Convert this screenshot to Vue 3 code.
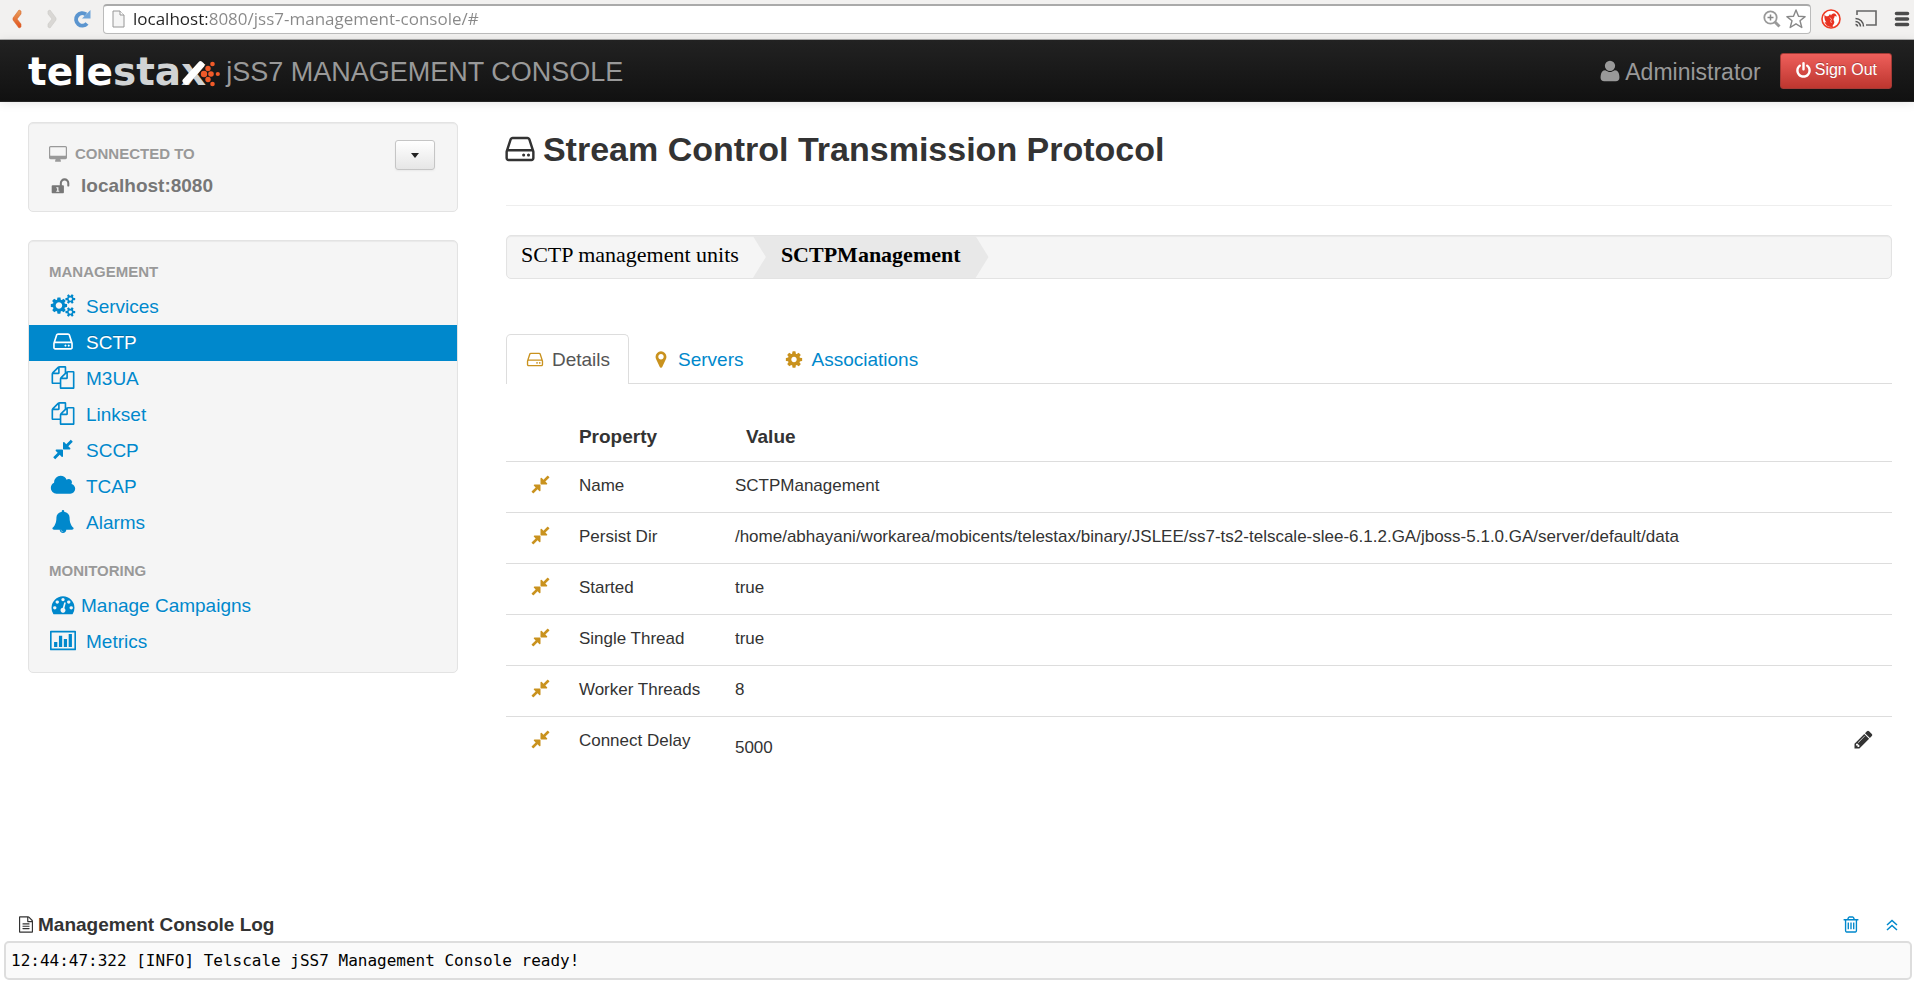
<script setup>
import { ref, h } from 'vue'

const glyphs = {
  cogs: 'M896 896q0-106-75-181t-181-75-181 75-75 181 75 181 181 75 181-75 75-181zm768 512q0-52-38-90t-90-38-90 38-38 90q0 53 37.5 90.5t90.5 37.5 90.5-37.5 37.5-90.5zm0-1024q0-52-38-90t-90-38-90 38-38 90q0 53 37.5 90.5t90.5 37.5 90.5-37.5 37.5-90.5zm-384 421v185q0 10-7 19.500t-16 10.500l-155 24q-11 35-32 76 34 48 90 115 7 11 7 20 0 12-7 19-23 30-82.500 89.500t-78.500 59.500q-11 0-21-7l-115-90q-37 19-77 31-11 108-23 155-7 24-30 24h-186q-11 0-20-7.500t-10-17.500l-23-153q-34-10-75-31l-118 89q-7 7-20 7-11 0-21-8-144-133-144-160 0-9 7-19 10-14 41-53t47-61q-23-44-35-82l-152-24q-10-1-17-9.500t-7-19.500v-185q0-10 7-19.500t16-10.500l155-24q11-35 32-76-34-48-90-115-7-11-7-20 0-12 7-20 22-30 82-89t79-59q11 0 21 7l115 90q34-18 77-32 11-108 23-154 7-24 30-24h186q11 0 20 7.500t10 17.500l23 153q34 10 75 31l118-89q8-7 20-7 11 0 21 8 144 133 144 160 0 8-7 19-12 16-42 54t-45 60q23 48 34 82l152 23q10 2 17 10.500t7 19.500zm640 533v140q0 16-149 31-12 27-30 52 51 113 51 138 0 4-4 7-122 71-124 71-8 0-46-47t-52-68q-20 2-30 2t-30-2q-14 21-52 68t-46 47q-2 0-124-71-4-3-4-7 0-25 51-138-18-25-30-52-149-15-149-31v-140q0-16 149-31 13-29 30-52-51-113-51-138 0-4 4-7 4-2 35-20t59-34 30-16q8 0 46 46.500t52 67.500q20-2 30-2t30 2q51-71 92-112l6-2q4 0 124 70 4 3 4 7 0 25-51 138 17 23 30 52 149 15 149 31zm0-1024v140q0 16-149 31-12 27-30 52 51 113 51 138 0 4-4 7-122 71-124 71-8 0-46-47t-52-68q-20 2-30 2t-30-2q-14 21-52 68t-46 47q-2 0-124-71-4-3-4-7 0-25 51-138-18-25-30-52-149-15-149-31v-140q0-16 149-31 13-29 30-52-51-113-51-138 0-4 4-7 4-2 35-20t59-34 30-16q8 0 46 46.500t52 67.500q20-2 30-2t30 2q51-71 92-112l6-2q4 0 124 70 4 3 4 7 0 25-51 138 17 23 30 52 149 15 149 31z',
  cog: 'M1152 896q0-106-75-181t-181-75-181 75-75 181 75 181 181 75 181-75 75-181zm512-109v222q0 12-8 23t-20 13l-185 28q-19 54-39 91 35 50 107 138 10 12 10 25t-9 23q-27 37-99 108t-94 71q-12 0-26-9l-138-108q-44 23-91 38-16 136-29 186-7 28-36 28h-222q-14 0-24.500-8.500t-11.500-21.500l-28-184q-49-16-90-37l-141 107q-10 9-25 9-14 0-25-11-126-114-165-168-7-10-7-23 0-12 8-23 15-21 51-66.500t54-70.500q-27-50-41-99l-183-27q-13-2-21-12.500t-8-23.500v-222q0-12 8-23t19-13l186-28q14-46 39-92-40-57-107-138-10-12-10-24 0-10 9-23 26-36 98.500-107.500t94.500-71.500q13 0 26 10l138 107q44-23 91-38 16-136 29-186 7-28 36-28h222q14 0 24.500 8.500t11.500 21.500l28 184q49 16 90 37l142-107q9-9 24-9 13 0 25 10 129 119 165 170 7 8 7 22 0 12-8 23-15 21-51 66.500t-54 70.500q26 50 41 98l183 28q13 2 21 12.500t8 23.500z',
  hdd: 'M1168 1216q0 33-23.500 56.500t-56.500 23.500-56.500-23.500-23.500-56.500 23.500-56.500 56.500-23.500 56.500 23.500 23.500 56.500zm256 0q0 33-23.500 56.500t-56.500 23.500-56.500-23.500-23.500-56.500 23.500-56.500 56.500-23.500 56.500 23.500 23.500 56.500zm112 160v-320q0-13-9.500-22.500t-22.500-9.500h-1216q-13 0-22.500 9.500t-9.500 22.500v320q0 13 9.500 22.500t22.500 9.500h1216q13 0 22.500-9.500t9.500-22.500zm-1230-480h1180l-157-482q-4-13-16-21.500t-26-8.500h-782q-14 0-26 8.500t-16 21.500zm1358 160v320q0 66-47 113t-113 47h-1216q-66 0-113-47t-47-113v-320q0-25 16-75l197-606q17-53 63-86t101-33h782q55 0 101 33t63 86l197 606q16 50 16 75z',
  copy: 'M1696 384q40 0 68 28t28 68v1216q0 40-28 68t-68 28h-960q-40 0-68-28t-28-68v-288h-544q-40 0-68-28t-28-68v-672q0-40 20-88t48-76l408-408q28-28 76-48t88-20h416q40 0 68 28t28 68v328q68-40 128-40h416zm-544 213l-299 299h299v-299zm-640-384l-299 299h299v-299zm196 647l316-316v-416h-384v416q0 40-28 68t-68 28h-416v640h512v-256q0-40 20-88t48-76zm956 804v-1152h-384v416q0 40-28 68t-68 28h-416v640h896z',
  compress: 'M896 960v448q0 26-19 45t-45 19-45-19l-144-144-332 332q-10 10-23 10t-23-10l-114-114q-10-10-10-23t10-23l332-332-144-144q-19-19-19-45t19-45 45-19h448q26 0 45 19t19 45zm755-672q0 13-10 23l-332 332 144 144q19 19 19 45t-19 45-45 19h-448q-26 0-45-19t-19-45v-448q0-26 19-45t45-19 45 19l144 144 332-332q10-10 23-10t23 10l114 114q10 10 10 23z',
  cloud: 'M1984 1152q0 159-112.500 271.500t-271.500 112.500h-1088q-185 0-316.500-131.500t-131.500-316.500q0-132 71-241.500t187-163.500q-2-28-2-43 0-212 150-362t362-150q158 0 286.500 88t187.500 230q70-62 166-62 106 0 181 75t75 181q0 75-41 138 129 30 213 134.500t84 239.500z',
  bell: 'M912 1696q0-16-16-16-59 0-101.500-42.500t-42.500-101.500q0-16-16-16t-16 16q0 73 51.500 124.500t124.500 51.500q16 0 16-16zm816-288q0 52-38 90t-90 38h-448q0 106-75 181t-181 75-181-75-75-181h-448q-52 0-90-38t-38-90q50-42 91-88t85-119.500 74.500-158.500 50-206 19.500-260q0-152 117-282.500t307-158.500q-8-19-8-39 0-40 28-68t68-28 68 28 28 68q0 20-8 39 190 28 307 158.500t117 282.500q0 139 19.500 260t50 206 74.500 158.500 85 119.500 91 88z',
  gauge: 'M384 1152q0-53-37.500-90.500t-90.500-37.500-90.500 37.500-37.500 90.500 37.500 90.500 90.500 37.500 90.500-37.500 37.500-90.500zm192-448q0-53-37.500-90.500t-90.500-37.500-90.500 37.500-37.500 90.500 37.500 90.500 90.500 37.500 90.500-37.500 37.500-90.500zm428 481l101-382q6-26-7.500-48.500t-38.500-29.500-48 6.500-30 39.500l-101 382q-60 5-107 43.500t-63 98.500q-20 77 20 146t117 89 146-20 89-117q16-60-6-117t-72-91zm660-33q0-53-37.500-90.500t-90.500-37.500-90.500 37.500-37.500 90.500 37.500 90.500 90.500 37.500 90.500-37.500 37.500-90.500zm-640-640q0-53-37.500-90.500t-90.500-37.500-90.500 37.500-37.500 90.500 37.500 90.500 90.500 37.500 90.500-37.500 37.500-90.500zm448 192q0-53-37.500-90.500t-90.500-37.500-90.500 37.500-37.500 90.500 37.500 90.500 90.500 37.500 90.500-37.500 37.500-90.500zm320 448q0 261-141 483-19 29-54 29h-1402q-35 0-54-29-141-221-141-483 0-182 71-348t191-286 286-191 348-71 348 71 286 191 191 286 71 348z',
  chart: 'M512 896v384h-256v-384zM896 384v896h-256v-896zM1280 640v640h-256v-640zM1664 256v1024h-256v-1024zM0 0h1920q66 0 66 66v1404q0 66-66 66h-1920q-66 0-66-66v-1404q0-66 66-66zM62 128v1280h1796v-1280z',
  desktop: 'M1728 992v-832q0-13-9.500-22.500t-22.500-9.500h-1600q-13 0-22.500 9.500t-9.500 22.500v832q0 13 9.500 22.500t22.500 9.500h1600q13 0 22.500-9.500t9.500-22.500zm128-832v1088q0 66-47 113t-113 47h-544q0 37 16 77.500t32 71 16 43.500q0 26-19 45t-45 19h-512q-26 0-45-19t-19-45q0-14 16-44t32-70 16-78h-544q-66 0-113-47t-47-113v-1088q0-66 47-113t113-47h1600q66 0 113 47t47 113z',
  unlock: 'M1728 576v256q0 26-19 45t-45 19h-64q-26 0-45-19t-19-45v-256q0-106-75-181t-181-75-181 75-75 181v192h96q40 0 68 28t28 68v576q0 40-28 68t-68 28h-960q-40 0-68-28t-28-68v-576q0-40 28-68t68-28h672v-192q0-185 131.500-316.500t316.500-131.500 316.500 131.500 131.500 316.500zM500 960v100h80v240h-80v100h280v-100h-80v-340z',
  user: 'M1600 1405q0 120-73 189.500t-194 69.500h-874q-121 0-194-69.500t-73-189.500q0-53 3.500-103.500t14-109 26.500-108.500 43-97.500 62-81 85.500-53.500 111.500-20q9 0 42 21.500t74.500 48 108 48 133.500 21.500 133.500-21.500 108-48 74.500-48 42-21.500q61 0 111.500 20t85.500 53.500 62 81 43 97.500 26.500 108.500 14 109 3.500 103.500zm-320-893q0 159-112.500 271.500t-271.500 112.500-271.500-112.500-112.500-271.500 112.500-271.500 271.500-112.500 271.500 112.500 112.500 271.500z',
  power: 'M1664 896q0 156-61 298t-164 245-245 164-298 61-298-61-245-164-164-245-61-298q0-182 80.500-343t226.500-270q43-32 95.500-25t83.500 50q32 42 24.500 94.500t-49.500 84.500q-98 74-151.500 181t-53.500 228q0 104 40.500 198.500t109.500 163.500 163.500 109.500 198.500 40.500 198.500-40.500 163.500-109.500 109.500-163.500 40.500-198.500q0-121-53.500-228t-151.500-181q-42-32-49.500-84.500t24.500-94.500q31-43 84-50t95 25q146 109 226.500 270t80.500 343zm-640-768v640q0 52-38 90t-90 38-90-38-38-90v-640q0-52 38-90t90-38 90 38 38 90z',
  marker: 'M1152 640q0-106-75-181t-181-75-181 75-75 181 75 181 181 75 181-75 75-181zm256 0q0 109-33 179l-364 774q-16 33-47.500 52t-67.500 19-67.500-19-46.500-52l-365-774q-33-70-33-179 0-212 150-362t362-150 362 150 150 362z',
  pencil: 'M491 1536l91-91-235-235-91 91v107h128v128h107zm523-928q0-22-22-22-10 0-17 7l-542 542q-7 7-7 17 0 22 22 22 10 0 17-7l542-542q7-7 7-17zm-54-192l416 416-832 832h-416v-416zm683 96q0 53-37 90l-166 166-416-416 166-165q36-38 90-38 53 0 91 38l235 234q37 39 37 91z',
  trash: 'M704 736v576q0 14-9 23t-23 9h-64q-14 0-23-9t-9-23v-576q0-14 9-23t23-9h64q14 0 23 9t9 23zm256 0v576q0 14-9 23t-23 9h-64q-14 0-23-9t-9-23v-576q0-14 9-23t23-9h64q14 0 23 9t9 23zm256 0v576q0 14-9 23t-23 9h-64q-14 0-23-9t-9-23v-576q0-14 9-23t23-9h64q14 0 23 9t9 23zm128 724v-948h-896v948q0 22 7 40.500t14.500 27 10.500 8.500h832q3 0 10.500-8.500t14.500-27 7-40.500zm-672-1076h448l-48-117q-7-9-17-11h-317q-10 2-17 11zm928 32v64q0 14-9 23t-23 9h-96v948q0 83-47 143.500t-113 60.500h-832q-66 0-113-58.500t-47-141.500v-952h-96q-14 0-23-9t-9-23v-64q0-14 9-23t23-9h309l70-167q15-37 54-63t79-26h320q40 0 79 26t54 63l70 167h309q14 0 23 9t9 23z',
  file: 'M1596 380q28 28 48 76t20 88v1152q0 40-28 68t-68 28h-1344q-40 0-68-28t-28-68v-1600q0-40 28-68t68-28h896q40 0 88 20t76 48zm-444-244v376h376q-10-29-22-41l-313-313q-12-12-41-22zm384 1528v-1024h-416q-40 0-68-28t-28-68v-416h-768v1536h1280zm-1024-864q0-14 9-23t23-9h704q14 0 23 9t9 23v64q0 14-9 23t-23 9h-704q-14 0-23-9t-9-23v-64zm736 224q14 0 23 9t9 23v64q0 14-9 23t-23 9h-704q-14 0-23-9t-9-23v-64q0-14 9-23t23-9h704zm0 256q14 0 23 9t9 23v64q0 14-9 23t-23 9h-704q-14 0-23-9t-9-23v-64q0-14 9-23t23-9h704z'
}

const boxes = {
  cogs: '-64 0 2048 1792',
  cloud: '0 0 2048 1792',
  chart: '-66 -128 2052 1792',
  desktop: '-64 0 1920 1792',
  file: '128 0 1536 1792',
  trash: '192 0 1408 1792'
}

const Icon = (props) =>
  h('svg', { viewBox: boxes[props.name] || '0 0 1792 1792', 'aria-hidden': 'true' }, [
    h('path', { d: glyphs[props.name], fill: 'currentColor', 'fill-rule': 'evenodd' })
  ])
Icon.props = ['name']

const address = ref('localhost:8080/jss7-management-console/#')

const groups = [
  {
    title: 'MANAGEMENT',
    items: [
      { label: 'Services', icon: 'cogs' },
      { label: 'SCTP', icon: 'hdd', active: true },
      { label: 'M3UA', icon: 'copy' },
      { label: 'Linkset', icon: 'copy' },
      { label: 'SCCP', icon: 'compress' },
      { label: 'TCAP', icon: 'cloud' },
      { label: 'Alarms', icon: 'bell' }
    ]
  },
  {
    title: 'MONITORING',
    items: [
      { label: 'Manage Campaigns', icon: 'gauge', tight: true },
      { label: 'Metrics', icon: 'chart' }
    ]
  }
]

const tabs = [
  { label: 'Details', icon: 'hdd' },
  { label: 'Servers', icon: 'marker' },
  { label: 'Associations', icon: 'cog' }
]
const activeTab = ref('Details')

const rows = [
  { name: 'Name', value: 'SCTPManagement' },
  {
    name: 'Persist Dir',
    value: '/home/abhayani/workarea/mobicents/telestax/binary/JSLEE/ss7-ts2-telscale-slee-6.1.2.GA/jboss-5.1.0.GA/server/default/data'
  },
  { name: 'Started', value: 'true' },
  { name: 'Single Thread', value: 'true' },
  { name: 'Worker Threads', value: '8' },
  { name: 'Connect Delay', value: '5000', editable: true }
]
</script>

<template>
  <div class="page">
    <div class="browser">
      <button class="tool back" type="button" aria-label="Back">
        <svg viewBox="0 0 10 20"><defs><linearGradient id="amber" x1="0" y1="0" x2="0" y2="1"><stop offset="0" stop-color="#e8a15c" /><stop offset="1" stop-color="#e2501c" /></linearGradient></defs><path d="M7 1l2 1v3L5 10l4 5v3l-2 1L1 11V9z" fill="url(#amber)" stroke="#d9662c" stroke-width=".6" /></svg>
      </button>
      <button class="tool forward" type="button" aria-label="Forward">
        <svg viewBox="0 0 10 20"><path d="M3 1L1 2v3l4 5-4 5v3l2 1 6-8V9z" fill="#d9d7d4" stroke="#cbc9c6" stroke-width=".6" /></svg>
      </button>
      <button class="tool reload" type="button" aria-label="Reload">
        <svg viewBox="0 0 18 20"><path d="M14 14.500A6.200 6.200 0 1 1 13 5.400" fill="none" stroke="#5b95cf" stroke-width="4" /><path d="M17.500 1v8.500H9z" fill="#6fa5da" /></svg>
      </button>
      <div class="address">
        <svg class="sheet" viewBox="0 0 13 18"><path d="M1 1h7l4 4v12H1z" fill="#f5f5f5" stroke="#969696" /><path d="M8 1v4h4" fill="#fff" stroke="#969696" /></svg>
        <input v-model="address" type="text" aria-label="Address" spellcheck="false" />
        <svg class="lens" viewBox="0 0 18 18"><circle cx="7.500" cy="7.500" r="6.200" fill="none" stroke="#999" stroke-width="1.800" /><path d="M4.500 7.500h6M7.500 4.500v6" stroke="#888" stroke-width="1.500" /><path d="M12 12l4.500 4.500" stroke="#999" stroke-width="3" /></svg>
        <svg class="star" viewBox="0 0 20 20"><path d="M10 1l2.500 6.300 6.600.3-5.100 4.200 1.800 6.700L10 14.800l-5.800 3.700L6 11.800.9 7.600l6.600-.3z" fill="#fff" stroke="#888" stroke-width="1.400" stroke-linejoin="round" /></svg>
      </div>
      <button class="tool bird" type="button" aria-label="Extension">
        <svg viewBox="0 0 20 20"><circle cx="10" cy="10" r="9" fill="#fff" stroke="#ee3b24" stroke-width="1.600" /><path d="M3.500 5.500c1 2 2.500 2 4 1.500l1.500-2 1 1.500c1-2 3-2.500 4.500-1.500l1.500 2.500-2.500-.5c.5 1.500-1 2-1 3.500s1.500 2 .5 4-2 2-1 3.500c-4 .5-7.500-1.500-8.500-5l2 .5c-1.500-1.500-2.500-4-2-8z" fill="#e93222" /><path d="M9 8.500l1.500 2-1 1.500 1 2" fill="none" stroke="#fff" stroke-width=".6" /></svg>
      </button>
      <button class="tool cast" type="button" aria-label="Cast">
        <svg viewBox="0 0 22 17"><path d="M2 5V1h19v14H11" fill="none" stroke="#666" stroke-width="1.600" /><path d="M.500 14.500a2 2 0 0 1 2 2M.500 11.500a5 5 0 0 1 5 5M.500 8.500a8 8 0 0 1 8 8" fill="none" stroke="#555" stroke-width="1.500" /></svg>
      </button>
      <button class="tool menu" type="button" aria-label="Menu">
        <svg viewBox="0 0 15 16"><path d="M2 2.500h11M2 8h11M2 13.500h11" stroke="#4b4b4b" stroke-width="3.600" stroke-linecap="round" /></svg>
      </button>
    </div>

    <header class="navbar">
      <a class="brand" href="#">
        <span class="logo">tele<span class="dim">sta<span class="cross">x</span></span></span>
        <svg class="dots" viewBox="0 0 20 26"><g fill="#f15a29"><circle cx="4" cy="13" r="3.200" /><circle cx="11" cy="13" r="2.800" /><circle cx="17.800" cy="13" r="2.100" /><circle cx="8" cy="7.500" r="2.700" /><circle cx="8" cy="18.500" r="2.700" /><circle cx="12.500" cy="3" r="2.300" /><circle cx="12.500" cy="23" r="2.300" /></g></svg>
        <span class="product">jSS7 MANAGEMENT CONSOLE</span>
      </a>
      <div class="account">
        <Icon name="user" class="account-icon" />
        <span class="account-name">Administrator</span>
        <button class="signout" type="button"><Icon name="power" class="power-icon" />Sign Out</button>
      </div>
    </header>

    <div class="layout">
      <aside class="sidebar">
        <section class="well connection">
          <div>
            <h2 class="caption"><Icon name="desktop" class="desktop-icon" />CONNECTED TO</h2>
            <p class="host"><Icon name="unlock" class="unlock-icon" />localhost:8080</p>
          </div>
          <button class="dropdown" type="button" aria-label="Choose connection"><span class="caret"></span></button>
        </section>
        <nav class="well menu-well">
          <template v-for="group in groups" :key="group.title">
            <h2 class="caption group-title">{{ group.title }}</h2>
            <a v-for="item in group.items" :key="item.label" href="#" class="nav-link" :class="{ active: item.active, tight: item.tight }">
              <Icon :name="item.icon" class="nav-icon" />{{ item.label }}
            </a>
          </template>
        </nav>
      </aside>

      <main>
        <h1><Icon name="hdd" class="title-icon" />Stream Control Transmission Protocol</h1>
        <ol class="breadcrumb">
          <li><a href="#">SCTP management units</a></li>
          <li class="current">SCTPManagement</li>
        </ol>
        <div class="tabs" role="tablist">
          <button v-for="tab in tabs" :key="tab.label" type="button" role="tab" class="tab" :class="{ selected: tab.label === activeTab }" :aria-selected="tab.label === activeTab" @click="activeTab = tab.label">
            <Icon :name="tab.icon" class="tab-icon" />{{ tab.label }}
          </button>
        </div>
        <table>
          <colgroup><col class="col-icon" /><col class="col-name" /><col /><col class="col-edit" /></colgroup>
          <thead>
            <tr><th></th><th>Property</th><th class="value-head">Value</th><th></th></tr>
          </thead>
          <tbody>
            <tr v-for="row in rows" :key="row.name">
              <td class="mark"><Icon name="compress" class="row-icon" /></td>
              <td>{{ row.name }}</td>
              <td :class="{ editable: row.editable }">{{ row.value }}</td>
              <td class="edit"><button v-if="row.editable" type="button" aria-label="Edit Connect Delay"><Icon name="pencil" class="row-icon" /></button></td>
            </tr>
          </tbody>
        </table>
      </main>
    </div>

    <footer>
      <div class="log-head">
        <h2><Icon name="file" class="file-icon" />Management Console Log</h2>
        <div class="log-tools">
          <a href="#" aria-label="Clear log"><Icon name="trash" class="trash-icon" /></a>
          <a href="#" aria-label="Expand log"><svg class="angles" viewBox="0 0 12 12"><path d="M1 6l5-4.500L11 6M1 11l5-4.500L11 11" fill="none" stroke="currentColor" stroke-width="1.500" /></svg></a>
        </div>
      </div>
      <pre>12:44:47:322 [INFO] Telscale jSS7 Management Console ready!</pre>
    </footer>
  </div>
</template>

<style>
body {
  background: #fff;
}
</style>

<style scoped>
* {
  box-sizing: border-box;
}
svg {
  display: block;
  flex: none;
}
button {
  font-family: inherit;
  cursor: pointer;
}
.page {
  min-height: 100vh;
  display: flex;
  flex-direction: column;
  font-family: "Liberation Sans", Arial, sans-serif;
  font-size: 17px;
  color: #333;
}

/* browser toolbar */
.browser {
  display: flex;
  align-items: center;
  height: 40px;
  padding: 0 4px 2px 12px;
  background: #f2f1f0;
  border-bottom: 1px solid #aaa;
}
.tool {
  padding: 0;
  border: 0;
  background: none;
}
.back svg, .forward svg {
  width: 10px;
  height: 20px;
}
.forward {
  margin-left: 25px;
}
.reload {
  margin: 0 12px 0 16px;
}
.reload svg {
  width: 18px;
  height: 20px;
}
.address {
  flex: 1;
  display: flex;
  align-items: center;
  height: 30px;
  padding: 0 4px 0 8px;
  background: #fff;
  border: 1px solid #bbb;
  border-top: 2px solid #aaa;
  border-radius: 4px;
}
.sheet {
  width: 13px;
  height: 18px;
}
.address input {
  flex: 1;
  min-width: 0;
  height: 27px;
  margin-left: 8px;
  padding: 0 0 2px;
  border: 0;
  outline: 0;
  font: 17px "Open Sans", "Noto Sans", sans-serif;
  color: transparent;
  background: linear-gradient(90deg, #222 74px, #888 74px) text;
  -webkit-background-clip: text;
}
.lens {
  width: 18px;
  height: 18px;
  margin-right: 5px;
}
.star {
  width: 20px;
  height: 20px;
}
.bird {
  margin-left: 10px;
}
.bird svg {
  width: 20px;
  height: 20px;
}
.cast {
  margin-left: 14px;
}
.cast svg {
  width: 22px;
  height: 17px;
}
.menu {
  margin-left: 17px;
}
.menu svg {
  width: 16px;
  height: 16px;
}

/* top bar */
.navbar {
  display: flex;
  justify-content: space-between;
  align-items: center;
  height: 62px;
  padding: 0 22px 0 28px;
  background: linear-gradient(#222, #111);
  border-bottom: 1px solid #252525;
  box-shadow: 0 1px 10px rgba(0, 0, 0, .1);
  color: #999;
}
.brand {
  display: flex;
  align-items: center;
  color: #999;
  text-decoration: none;
}
.logo {
  padding-top: 2px;
  font: bold 39px/60px "DejaVu Sans", sans-serif;
  color: #fff;
}
.dim {
  color: #d1d3d4;
}
.cross {
  position: relative;
}
.cross::after {
  content: "";
  position: absolute;
  left: 9px;
  bottom: 7px;
  width: 7px;
  height: 28px;
  border-radius: 2px;
  background: #fff;
  transform: rotate(42deg);
}
.dots {
  width: 20px;
  height: 26px;
  margin: 6px 6px 0 -6px;
}
.product {
  padding-top: 4px;
  font-size: 27px;
}
.account {
  display: flex;
  align-items: center;
  font-size: 23px;
}
.account-icon {
  width: 24px;
  height: 24px;
  margin-right: 3px;
}
.account-name {
  padding-top: 4px;
}
.signout {
  display: flex;
  align-items: center;
  height: 36px;
  margin-left: 19px;
  padding: 0 14px 1px 14px;
  border: 1px solid #a33a35;
  border-radius: 3px;
  background: linear-gradient(#ee5f5b, #bd362f);
  color: #fff;
  font-size: 16px;
  text-shadow: 0 -1px 0 rgba(0, 0, 0, .25);
}
.power-icon {
  width: 17px;
  height: 17px;
  margin-right: 3px;
}

/* columns */
.layout {
  display: grid;
  grid-template-columns: 23.077% 1fr;
  column-gap: 2.564%;
  align-items: start;
  padding: 20px 22px 0 28px;
}
.sidebar {
  display: grid;
  gap: 28px;
}
.well {
  background: #f5f5f5;
  border: 1px solid #e3e3e3;
  border-radius: 5px;
  box-shadow: inset 0 1px 1px rgba(0, 0, 0, .05);
}
.caption {
  display: flex;
  align-items: center;
  margin: 0;
  font-size: 15px;
  line-height: 24px;
  color: #999;
  text-shadow: 0 1px 0 rgba(255, 255, 255, .5);
}
.connection {
  display: flex;
  justify-content: space-between;
  align-items: flex-start;
  height: 90px;
  padding: 17px 22px 17px 20px;
}
.connection .caption {
  margin-top: 2px;
}
.desktop-icon {
  width: 18px;
  height: 17px;
  margin-right: 8px;
}
.host {
  display: flex;
  align-items: center;
  margin: 8px 0 0;
  font-size: 19px;
  font-weight: bold;
  line-height: 24px;
  color: #777;
}
.unlock-icon {
  width: 19px;
  height: 19px;
  margin: 0 11px 0 2px;
}
.dropdown {
  display: grid;
  place-items: center;
  width: 40px;
  height: 30px;
  padding: 0;
  border: 1px solid #c5c5c5;
  border-radius: 3px;
  background: linear-gradient(#fff, #e6e6e6);
  box-shadow: 0 1px 2px rgba(0, 0, 0, .05);
}
.caret {
  border: 4px solid transparent;
  border-top: 5px solid #222;
  border-bottom: 0;
}
.menu-well {
  padding: 12px 0;
}
.group-title {
  padding: 7px 20px 5px;
}
.nav-link + .group-title {
  padding-top: 18px;
}
.nav-link {
  display: flex;
  align-items: center;
  height: 36px;
  padding: 0 21px;
  font-size: 19px;
  color: #08c;
  text-decoration: none;
  text-shadow: 0 1px 0 rgba(255, 255, 255, .5);
}
.nav-link.active {
  background: #08c;
  color: #fff;
  text-shadow: 0 -1px 0 rgba(0, 0, 0, .2);
}
.nav-icon {
  width: 26px;
  height: 23px;
  margin: 0 10px 3px 0;
}
.tight .nav-icon {
  margin-right: 5px;
}

/* content */
h1 {
  display: flex;
  align-items: center;
  margin: 0 0 29px;
  padding: 5px 0 34px;
  border-bottom: 1px solid #eee;
  font-size: 34px;
  line-height: 44px;
}
.title-icon {
  width: 34px;
  height: 34px;
  margin: 0 6px 0 -3px;
}
.breadcrumb {
  display: flex;
  height: 44px;
  margin: 0 0 55px;
  padding: 0;
  overflow: hidden;
  list-style: none;
  border: 1px solid #e3e3e3;
  border-radius: 5px;
  background: #f5f5f5;
  box-shadow: inset 0 1px 1px rgba(0, 0, 0, .05);
  font: 22px/38px "Liberation Serif", "Times New Roman", serif;
  color: #000;
}
.breadcrumb li {
  padding: 0 14px;
}
.breadcrumb a {
  color: #000;
  text-decoration: none;
}
.breadcrumb .current {
  padding: 0 28px;
  background: #e8e8e8;
  clip-path: polygon(0 0, calc(100% - 13px) 0, 100% 50%, calc(100% - 13px) 100%, 0 100%, 13px 50%);
  font-weight: bold;
}
.tabs {
  display: flex;
  gap: 3px;
  border-bottom: 1px solid #ddd;
}
.tab {
  display: flex;
  align-items: center;
  height: 50px;
  margin-bottom: -1px;
  padding: 0 18px 0 17px;
  border: 1px solid transparent;
  border-bottom: 0;
  border-radius: 5px 5px 0 0;
  background: none;
  font-size: 19px;
  color: #08c;
}
.tab.selected {
  background: #fff;
  border-color: #ddd;
  color: #555;
}
.tab-icon {
  width: 22px;
  height: 19px;
  margin-right: 6px;
  color: #c9921e;
}
table {
  width: 100%;
  margin-top: 26px;
  border-collapse: collapse;
  table-layout: fixed;
}
.col-icon {
  width: 63px;
}
.col-name {
  width: 156px;
}
.col-edit {
  width: 57px;
}
th, td {
  padding: 0 10px;
  text-align: left;
  line-height: 20px;
}
th {
  height: 51px;
  padding-top: 3px;
  font-size: 19px;
}
th.value-head {
  padding-left: 21px;
}
td {
  height: 51px;
  padding-top: 14px;
  vertical-align: top;
  border-top: 1px solid #ddd;
  white-space: nowrap;
}
td.editable {
  padding-top: 21px;
}
td.mark {
  padding: 12px 0 0 24px;
}
.row-icon {
  width: 21px;
  height: 21px;
}
.mark .row-icon {
  color: #c9921e;
}
td.edit {
  padding: 12px 0 0 18px;
}
.edit button {
  display: block;
  padding: 0;
  border: 0;
  background: none;
  color: #333;
}

/* log */
footer {
  margin-top: auto;
  padding: 20px 2px 1px 4px;
}
.log-head {
  display: flex;
  justify-content: space-between;
  align-items: center;
  height: 34px;
  padding: 1px 14px 0 15px;
}
.log-head h2 {
  display: flex;
  align-items: center;
  margin: 0;
  font-size: 19px;
}
.file-icon {
  width: 14px;
  height: 17px;
  margin-right: 5px;
}
.log-tools {
  display: flex;
  align-items: center;
  gap: 27px;
}
.log-tools a {
  color: #08c;
}
.trash-icon {
  width: 16px;
  height: 19px;
}
.angles {
  width: 12px;
  height: 12px;
}
pre {
  height: 39px;
  margin: 0;
  padding: 0 5px;
  border: 2px solid #ddd;
  border-radius: 5px;
  background: #fafafa;
  font: 16px/36px "DejaVu Sans Mono", monospace;
  color: #000;
}
</style>
